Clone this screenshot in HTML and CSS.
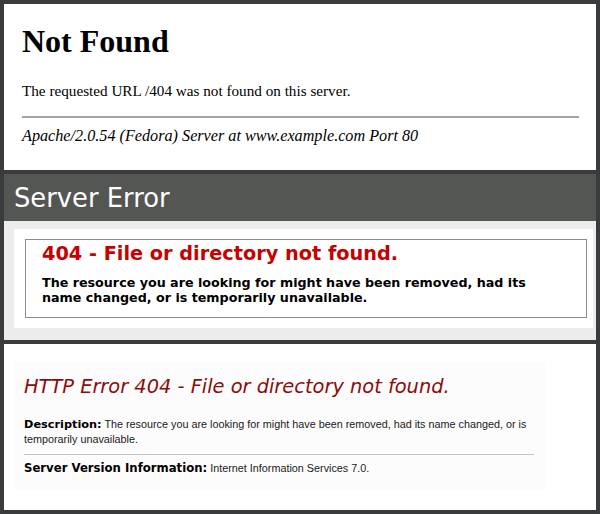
FILE: index.html
```html
<!DOCTYPE html>
<html>
<head>
<meta charset="utf-8">
<link rel="stylesheet" href="styles.css">
</head>
<body>
  <section class="panel apache">
    <h1 class="apache-title">Not Found</h1>
    <p class="apache-text">The requested URL /404 was not found on this server.</p>
    <div class="apache-rule"></div>
    <address class="apache-addr">Apache/2.0.54 (Fedora) Server at www.example.com Port 80</address>
  </section>

  <section class="panel iis6">
    <header class="iis6-header">Server Error</header>
    <div class="iis6-body">
      <div class="iis6-white">
        <div class="iis6-box">
          <h2 class="iis6-title">404 - File or directory not found.</h2>
          <h3 class="iis6-text">The resource you are looking for might have been removed, had its<br>name changed, or is temporarily unavailable.</h3>
        </div>
      </div>
    </div>
  </section>

  <section class="panel iis7">
    <div class="iis7-content">
      <h3 class="iis7-title">HTTP Error 404 - File or directory not found.</h3>
      <p class="iis7-line"><strong class="iis7-label">Description:</strong> The resource you are looking for might have been removed, had its name changed, or is<br>temporarily unavailable.</p>
      <div class="iis7-rule"></div>
      <p class="iis7-line iis7-server"><strong class="iis7-label">Server Version Information:</strong> Internet Information Services 7.0.</p>
    </div>
  </section>
</body>
</html>
```

FILE: styles.css
```css
* { box-sizing: border-box; }

html, body {
  margin: 0;
  padding: 0;
}

body {
  width: 600px;
  height: 514px;
  background: #3a3b3d;
  padding: 4px;
  display: flex;
  flex-direction: column;
  gap: 4px;
  overflow: hidden;
}

.panel {
  height: 166px;
  width: 592px;
  background: #ffffff;
  flex: none;
}

/* ---------- Apache ---------- */
.apache {
  padding: 19px 17px 0 18px;
  font-family: "Liberation Serif", "Times New Roman", serif;
  color: #000;
}

.apache-title {
  margin: 0;
  font-size: 32px;
  line-height: 37px;
  font-weight: bold;
}

.apache-text {
  margin: 22px 0 0 0;
  font-size: 15.2px;
  line-height: 18px;
}

.apache-rule {
  margin-top: 16px;
  height: 2px;
  background: #a2a2a2;
}

.apache-addr {
  margin-top: 9px;
  font-size: 16.2px;
  line-height: 18px;
  font-style: italic;
}

/* ---------- IIS 6 ---------- */
.iis6 {
  background: #ececec;
  display: flex;
  flex-direction: column;
}

.iis6-header {
  height: 47px;
  background: #545654;
  color: #ffffff;
  font-family: "DejaVu Sans", Verdana, sans-serif;
  font-size: 25.8px;
  line-height: 30px;
  padding: 9px 10px 8px 10px;
}

.iis6-body {
  padding: 8px 3px 12px 10px;
}

.iis6-white {
  background: #ffffff;
  padding: 10px 6px 10px 11px;
}

.iis6-box {
  border: 1px solid #8c8c8c;
  padding: 3px 10px 12px 16px;
  font-family: "DejaVu Sans", Verdana, sans-serif;
}

.iis6-title {
  margin: 0;
  color: #c80000;
  font-size: 19.3px;
  line-height: 22px;
  font-weight: bold;
}

.iis6-text {
  margin: 10px 0 0 0;
  color: #000;
  font-size: 12.7px;
  line-height: 15px;
  font-weight: bold;
  white-space: nowrap;
}

/* ---------- IIS 7 ---------- */
.iis7 {
  padding: 18px 0 0 10px;
}

.iis7-content {
  width: 531px;
  height: 128px;
  background: #fcfcfc;
  padding: 14px 11px 0 10px;
}

.iis7-title {
  margin: 0;
  font-family: "DejaVu Sans", Verdana, sans-serif;
  font-style: italic;
  font-weight: normal;
  font-size: 19.4px;
  line-height: 22px;
  color: #8a0c0c;
}

.iis7-line {
  margin: 19px 0 0 0;
  font-family: "Liberation Sans", Arial, sans-serif;
  font-size: 10.8px;
  line-height: 14px;
  color: #1a1a1a;
  white-space: nowrap;
}

.iis7-label {
  font-family: "DejaVu Sans", Verdana, sans-serif;
  font-size: 11.3px;
  font-weight: bold;
  color: #000;
}

.iis7-rule {
  margin-top: 8px;
  height: 1px;
  background: #c4c4c4;
}

.iis7-server {
  margin-top: 6px;
}

.iis7-server .iis7-label {
  font-size: 11.7px;
}
```
